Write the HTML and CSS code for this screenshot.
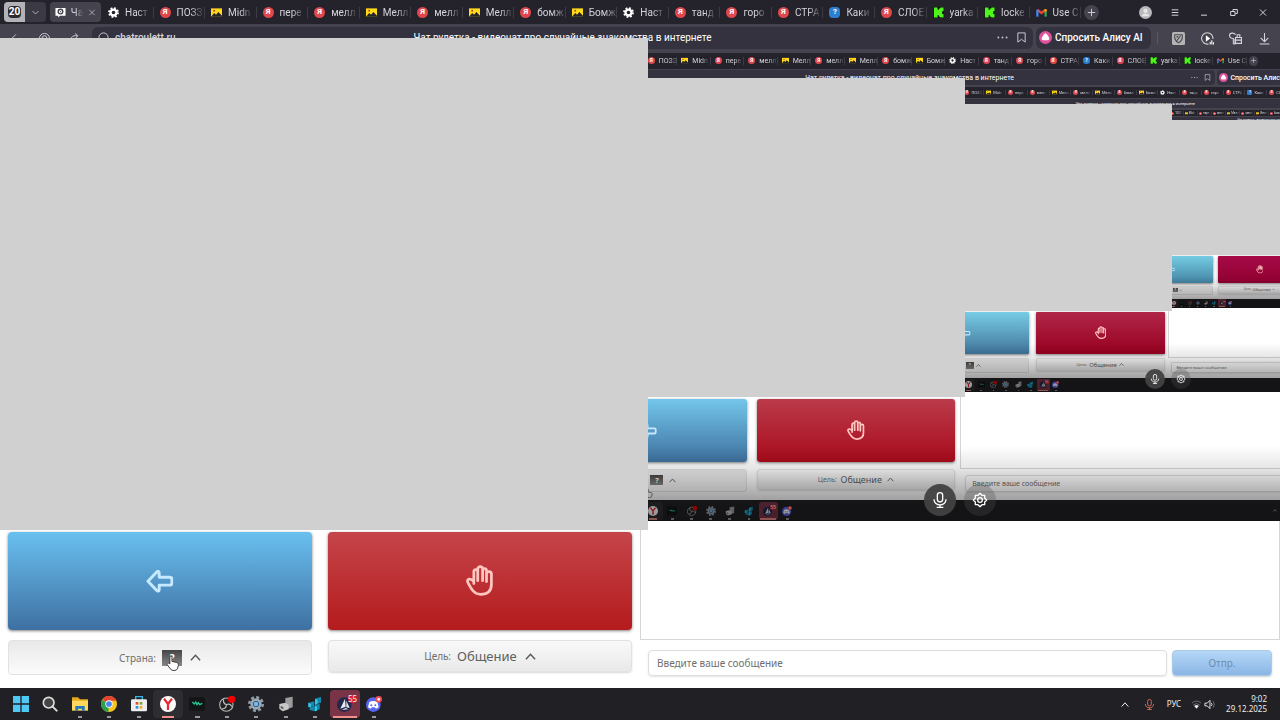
FILE: index.html
```html
<!DOCTYPE html>
<html lang="ru">
<head>
    <meta charset="UTF-8">
    <meta name="viewport" content="width=device-width, initial-scale=1.0">
    <title>Чат рулетка</title>
    <link rel="stylesheet" href="styles.css">
</head>
<body>
    <svg class="sprite" aria-hidden="true">
        <symbol id="chat" viewBox="0 0 24 24"><path fill="#fff" d="M1 2h22v17H11l-4 4v-4H1z"/><circle cx="12" cy="10" r="5" fill="none" stroke="#44434e" stroke-width="3"/><circle cx="12" cy="10" r="1.5" fill="#44434e"/></symbol>
        <symbol id="gear" viewBox="0 0 24 24"><circle cx="12" cy="12" r="6.5" fill="none" stroke="#fff" stroke-width="5"/><circle cx="12" cy="12" r="9.8" fill="none" stroke="#fff" stroke-width="4" stroke-dasharray="4 3.7"/></symbol>
        <symbol id="photo" viewBox="0 0 24 24"><path fill="#ffd91a" d="M0 3h24v18H0z"/><path fill="#24232c" d="M0 21l7-8 4 4 5-6 8 8v2z"/><circle cx="7" cy="8" r="2" fill="#b3321b"/></symbol>
        <symbol id="kick" viewBox="0 0 24 24"><path fill="#111" d="M0 0h24v24H0z"/><path fill="#4df51b" d="M2 1h8v5h3V3h3V1h7v8h-3v6h3v8h-7v-2h-3v-3h-3v5H2z"/></symbol>
        <symbol id="mail" viewBox="0 0 24 24"><path fill="none" stroke="#e84335" stroke-width="5" d="M3 6l9 7 9-7"/><path stroke="#4285f4" stroke-width="5" d="M3 6v15"/><path stroke="#34a853" stroke-width="5" d="M21 10v11"/><path stroke="#fbbc04" stroke-width="5" d="M21 5v5"/></symbol>
        <symbol id="up" viewBox="0 0 24 24"><path class="line bold" d="M2 18l10-11 10 11"/></symbol>
        <symbol id="down" viewBox="0 0 24 24"><path class="line" d="M4 8l8 8 8-8"/></symbol>
        <symbol id="close" viewBox="0 0 24 24"><path class="line" d="M4 4l16 16M20 4L4 20"/></symbol>
        <symbol id="plus" viewBox="0 0 24 24"><path class="line" d="M12 4v16M4 12h16"/></symbol>
        <symbol id="user" viewBox="0 0 24 24"><circle cx="12" cy="12" r="12" fill="#b9b9bd"/><circle cx="12" cy="9" r="4" fill="#e5e5e8"/><path fill="#e5e5e8" d="M5 19c0-7 14-7 14 0z"/></symbol>
        <symbol id="menu" viewBox="0 0 24 24"><path class="line bold" d="M2 4h20M2 12h20M2 20h20"/></symbol>
        <symbol id="minimize" viewBox="0 0 24 24"><path class="line bold" d="M3 20h18"/></symbol>
        <symbol id="restore" viewBox="0 0 24 24"><path class="line bold" d="M2 9h13v12H2zM9 8V3h13v12h-6"/></symbol>
        <symbol id="cross" viewBox="0 0 24 24"><path class="line bold" d="M3 3l18 18M21 3L3 21"/></symbol>
        <symbol id="back" viewBox="0 0 24 24"><path class="line" d="M15 3l-9 9 9 9"/></symbol>
        <symbol id="home" viewBox="0 0 24 24"><circle class="line" cx="12" cy="12" r="11"/><circle class="line" cx="12" cy="11" r="5"/></symbol>
        <symbol id="reload" viewBox="0 0 24 24"><path class="line" d="M4 21c-4-9 4-17 14-15M13 1l6 5-5 6"/></symbol>
        <symbol id="info" viewBox="0 0 24 24"><circle class="line" cx="12" cy="12" r="10"/></symbol>
        <symbol id="dots" viewBox="0 0 24 24"><g fill="#c9c8cf"><circle cx="3" cy="12" r="2"/><circle cx="12" cy="12" r="2"/><circle cx="21" cy="12" r="2"/></g></symbol>
        <symbol id="bookmark" viewBox="0 0 24 24"><path class="line" d="M4 2h16v20l-8-6-8 6z"/></symbol>
        <symbol id="alice" viewBox="0 0 24 24"><circle cx="12" cy="12" r="12" fill="#e0529c"/><path fill="#fff" d="M12 4c2 0 8 9 7 11-1 3-13 3-14 0-1-2 5-11 7-11z"/></symbol>
        <symbol id="shield" viewBox="0 0 24 24"><rect width="24" height="24" rx="3" fill="#b4b4b5"/><path fill="none" stroke="#4b4a50" stroke-width="2" d="M5 5h14c1 8-3 13-7 15-4-2-8-7-7-15zM9 16l7-9M8 9h4"/></symbol>
        <symbol id="play" viewBox="0 0 24 24"><path class="line" d="M14 22A10.5 10.5 0 1 1 22 13"/><path fill="#fff" d="M9 6l8 6-8 6zM16 23v-5h2v5zM19 23v-8h2v8zM22 23v-4h2v4z"/></symbol>
        <symbol id="keys" viewBox="0 0 24 24"><path class="line" d="M8 22V12C3 12 1 9 1 6c0-5 9-5 11-1M8 22h3v-9M12 10h11v11H12zM15 10V5h5v5M12 15h11"/></symbol>
        <symbol id="download" viewBox="0 0 24 24"><path class="line" d="M12 2v15M5 11l7 7 7-7M3 22h18"/></symbol>
        <symbol id="arrow" viewBox="0 0 28 25"><path fill="none" stroke="#c6e9ff" stroke-width="3" stroke-linejoin="round" d="M2 12.5L11 3c1-1 2.5-1 2.5 1v4.5H24c2 0 2.5 1 2.5 2v4c0 1-.5 2-2.5 2H13.5V21c0 2-1.5 2-2.5 1z"/></symbol>
        <symbol id="hand" viewBox="0 0 28 32"><path fill="none" stroke="#ffc5bf" stroke-width="2.8" stroke-linecap="round" stroke-linejoin="round" d="M8 17V7c0-3 4-3 4 0v9V4c0-3 5-3 5 0v12V6c0-3 4-3 4 0v11V9c0-3 5-3 5 0v11c0 7-4 10-11 10-6 0-9-4-13-12-2-4 3-5 6-1v2"/></symbol>
        <symbol id="mic" viewBox="0 0 24 24"><rect class="line" x="8" y="1" width="8" height="14" rx="4"/><path class="line" d="M3 11c0 11 18 11 18 0M12 19v4M7 23h10"/></symbol>
        <symbol id="cog" viewBox="0 0 24 24"><path class="line" stroke-linejoin="round" d="M9 5l3-3 3 3h4v4l3 3-3 3v4h-4l-3 3-3-3H5v-4l-3-3 3-3V5z"/><circle class="line" cx="12" cy="12" r="3.5"/></symbol>
        <symbol id="cursor" viewBox="0 0 24 30"><path fill="#fff" stroke="#333" stroke-width="1.8" stroke-linejoin="round" d="M7 17V4c0-3 4-3 4 0v8l9 2c3 1 3 3 3 6l-2 6c-2 4-10 4-13 0L2 18c-2-3 2-5 5-1z"/></symbol>
        <symbol id="windows" viewBox="0 0 24 24"><path fill="#50c8f4" d="M0 0h11v11H0zM13 0h11v11H13zM0 13h11v11H0zM13 13h11v11H13z"/></symbol>
        <symbol id="search" viewBox="0 0 24 24"><circle cx="10" cy="10" r="8" fill="#444" stroke="#ddd" stroke-width="2.5"/><path stroke="#ddd" stroke-width="3" stroke-linecap="round" d="M16 16l6 6"/></symbol>
        <symbol id="folder" viewBox="0 0 24 24"><path fill="#e5a91c" d="M0 2h9l3 3h12v8H0z"/><path fill="#ffd75e" d="M0 7h24v15H0z"/><path fill="#1f78bd" d="M5 22v-7h14v7h-4v-3H9v3z"/></symbol>
        <symbol id="chrome" viewBox="0 0 24 24"><circle cx="12" cy="12" r="12" fill="#f6c41f"/><path fill="#e14334" d="M12 12L2 5.5A12 12 0 0 1 23 7H12z"/><path fill="#2da04e" d="M12 12l-1 12A12 12 0 0 1 1.6 6z"/><circle cx="12" cy="12" r="5.5" fill="#fff"/><circle cx="12" cy="12" r="4.3" fill="#4285f4"/></symbol>
        <symbol id="store" viewBox="0 0 24 24"><path fill="none" stroke="#37b4e6" stroke-width="2" d="M7 6V1h10v5"/><rect y="5" width="24" height="18" rx="2" fill="#eee"/><path fill="#e64b2d" d="M7 9h4v4H7z"/><path fill="#75a928" d="M13 9h4v4h-4z"/><path fill="#2e91d0" d="M7 15h4v4H7z"/><path fill="#f2ad20" d="M13 15h4v4h-4z"/></symbol>
        <symbol id="yandex" viewBox="0 0 24 24"><circle cx="12" cy="12" r="12" fill="#fff"/><path fill="none" stroke="#e92b36" stroke-width="3.5" d="M6 4l6 8 6-8M12 11v10"/></symbol>
        <symbol id="wave" viewBox="0 0 24 24"><rect y="2" width="24" height="20" rx="3" fill="#121514"/><path fill="none" stroke="#20c994" stroke-width="2" d="M5 9l3 3 2-3 2 4 2-3 2 3 4-2"/></symbol>
        <symbol id="obs" viewBox="0 0 24 24"><circle cx="11" cy="13" r="10" fill="#222" stroke="#bbb" stroke-width="1.6"/><path fill="none" stroke="#bbb" stroke-width="1.8" d="M11 13c-4-2-5-5-4-8M11 13c4-2 7 0 8 3M11 13c0 4-3 6-6 6"/><circle cx="19" cy="5" r="5.5" fill="#f00000"/></symbol>
        <symbol id="settings" viewBox="0 0 24 24"><circle cx="12" cy="12" r="10" fill="none" stroke="#8e9ba6" stroke-width="4" stroke-dasharray="4.5 3.35"/><circle cx="12" cy="12" r="6.5" fill="#26476b" stroke="#9aa8b4" stroke-width="4"/><circle cx="12" cy="12" r="3.5" fill="#71b8ef"/></symbol>
        <symbol id="device" viewBox="0 0 24 24"><path fill="#9c9c9c" d="M11 3l11-2v16l-7 2-4-3z"/><path fill="#c8c8c8" d="M2 12l9-2 5 3v7l-9 3-5-4z"/><path fill="#555" d="M4 15l4 2v3l-4-2z"/></symbol>
        <symbol id="cubes" viewBox="0 0 24 24"><path fill="#138aad" d="M12 4l9-3v9l-9 3zM2 10l9-2v7l-9 2zM4 17l8-2v8l-8-2zM12 13l7-1v8l-7 3z"/><path fill="#35c4e3" d="M12 4l4 2v5l-4 2zM2 10l4 2v4l-4 1zM12 15l3 1v6l-3 1z"/></symbol>
        <symbol id="launcher" viewBox="0 0 24 24"><circle cx="11" cy="13" r="11" fill="#232849"/><path fill="#e8e8f6" d="M12 4l1 12-8 3zM14 7l5 11-5-1zM7 21l6-3 4 2z"/></symbol>
        <symbol id="discord" viewBox="0 0 24 24"><circle cx="11" cy="13" r="11" fill="#5865f2"/><path fill="#fff" d="M5 9q6-3 12 0l2 8-4 2-2-2H9l-2 2-4-2z"/><circle cx="8" cy="14" r="1.5" fill="#5865f2"/><circle cx="14" cy="14" r="1.5" fill="#5865f2"/><circle cx="19" cy="5" r="5" fill="#f04d55"/><circle cx="19" cy="5" r="2" fill="#fff"/></symbol>
        <symbol id="wifi" viewBox="0 0 24 24"><path fill="none" stroke="#777" stroke-width="2" d="M2 9q10-9 20 0M5 13q7-6 14 0"/><path fill="#eee" d="M7 15q5-4 10 0l-5 6z"/></symbol>
        <symbol id="sound" viewBox="0 0 24 24"><path class="line" d="M2 9h5l6-6v18l-6-6H2zM16 9q3 3 0 6"/><path fill="none" stroke="#777" stroke-width="2" d="M20 5q5 7 0 14"/></symbol>
    </svg>

    <div id="root"></div>
    <script src="script.js"></script>
</body>
</html>
```
FILE: styles.css
```css
* {
    box-sizing: border-box;
}

body {
    margin: 0;
    background: #fff;
    overflow: hidden;
    font-family: "Noto Sans", "Open Sans", sans-serif;
}

button, input {
    font: inherit;
    margin: 0;
    padding: 0;
    border: 0;
    background: none;
    color: inherit;
    min-width: 0;
}

a {
    color: inherit;
    text-decoration: none;
}

.sprite {
    position: absolute;
    width: 0;
    height: 0;
}

.line {
    fill: none;
    stroke: currentColor;
    stroke-width: 2;
}

.line.bold {
    stroke-width: 3;
}

.icon {
    width: var(--icon);
    height: var(--icon);
    flex: none;
}

/* each screen shows a smaller copy of itself in the video pane */
.screen {
    position: relative;
    display: grid;
    grid-template-rows: minmax(0, 24fr) minmax(0, 28fr) minmax(0, 636fr) minmax(0, 32fr);
    background: #fff;
    overflow: hidden;
    font-size: var(--text);
}

.level-1 {
    --tiny: 8px;
    --text: 10px;
    --large: 13px;
    --icon: 11px;
    --app: 16px;
    --flag: 20px;
    --round: 32px;
    --gap: 6px;
    --radius: 4px;
    --red-top: #c5454a;
    --red-bottom: #b41b1d;
    --blue-top: #69c0ef;
    --blue-bottom: #3e70a2;
    height: 100vh;
}

.level-2 {
    --tiny: 5px;
    --text: 7px;
    --large: 9px;
    --icon: 7px;
    --app: 10px;
    --flag: 13px;
    --round: 20px;
    --gap: 4px;
    --radius: 3px;
    --red-top: #ba3b4b;
    --red-bottom: #a90b1b;
    --blue-top: #73c6ea;
    --blue-bottom: #3e719f;
}

.level-3 {
    --tiny: 3px;
    --text: 4px;
    --large: 6px;
    --icon: 5px;
    --app: 7px;
    --flag: 8px;
    --round: 14px;
    --gap: 2px;
    --radius: 1px;
    --red-top: #b02648;
    --red-bottom: #980020;
    --blue-top: #78cce5;
    --blue-bottom: #40749a;
}

.level-4 {
    --tiny: 2px;
    --text: 3px;
    --large: 4px;
    --icon: 3px;
    --app: 4px;
    --flag: 5px;
    --round: 8px;
    --gap: 1px;
    --radius: 1px;
    --red-top: #a60b48;
    --red-bottom: #90002f;
    --blue-top: #75cce3;
    --blue-bottom: #4384a4;
}

.video .screen {
    flex: none;
    width: 130%;
    aspect-ratio: 16 / 9;
}

/* tab strip */
.tabs {
    display: grid;
    grid-template-columns: 4fr 42fr 4fr 51fr 1fr 979fr 3fr 15fr 32fr 147fr 2fr;
    align-items: center;
    background: #24232c;
    color: #d5d4da;
    font-family: Roboto, sans-serif;
}

.tabs > *, .toolbar > *, .taskbar > * {
    min-width: 0;
}

.tab-count {
    grid-column: 2;
    height: 84%;
    display: grid;
    grid-template-columns: 1fr 1fr;
    place-items: center;
    background: #3a3944;
    border-radius: var(--radius);
    overflow: hidden;
}

.tab-count b {
    width: 100%;
    height: 100%;
    display: grid;
    place-items: center;
    background: #b3b2b7;
}

.tab-count i {
    padding: 0 1px;
    font-style: normal;
    line-height: 1.2;
    color: #fff;
    background: #2b2a32;
    border-radius: var(--radius);
}

.tab-count .icon {
    width: calc(var(--icon) - 2px);
}

.tab-active {
    grid-column: 4;
    height: 84%;
    display: flex;
    align-items: center;
    justify-content: space-evenly;
    background: #44434e;
    border-radius: var(--radius);
    overflow: hidden;
}

.tab-active .icon:last-child {
    width: calc(var(--icon) - 3px);
}

.tab-active span {
    mask-image: linear-gradient(90deg, #000 40%, transparent);
}

.tab-list {
    grid-column: 6;
    display: flex;
}

.tab {
    flex: 1 1 0;
    min-width: 0;
    display: flex;
    align-items: center;
    gap: var(--gap);
    padding-left: var(--gap);
    border-right: 1px solid #3d3c46;
}

.tab-name {
    white-space: nowrap;
    mask-image: linear-gradient(90deg, #000 55%, rgba(0, 0, 0, 0.2));
}

.ya, .help {
    width: var(--icon);
    height: var(--icon);
    flex: none;
    display: grid;
    place-items: center;
    background: #e0474d;
    border-radius: 50%;
    color: #fff;
    font-size: var(--tiny);
    font-weight: bold;
    line-height: 1;
}

.help {
    background: #2a7fd0;
    border-radius: var(--radius);
}

.new-tab {
    grid-column: 8;
    aspect-ratio: 1;
    display: grid;
    place-items: center;
    background: #44434e;
    border-radius: 50%;
}

.window-buttons {
    grid-column: 10;
    display: grid;
    grid-template-columns: repeat(5, 1fr);
    place-items: center;
}

.window-buttons button, .tools button, .nav button {
    display: grid;
    place-items: center;
}

.window-buttons .icon:not(.avatar) {
    width: calc(var(--icon) - 3px);
}

.window-buttons .avatar {
    width: calc(var(--icon) + 2px);
    height: calc(var(--icon) + 2px);
}

/* address bar */
.toolbar {
    display: grid;
    grid-template-columns: 89fr 3fr 941fr 3fr 115fr 13fr 115fr 1fr;
    align-items: center;
    background: #44434e;
    color: #d5d4da;
    font-family: Roboto, sans-serif;
}

.nav {
    display: grid;
    grid-template-columns: repeat(3, 1fr);
    place-items: center;
}

.address {
    grid-column: 3;
    height: 80%;
    display: grid;
    grid-template-columns: 1fr auto 1fr;
    align-items: center;
    padding: 0 var(--gap);
    background: #33323e;
    border-radius: var(--gap);
    white-space: nowrap;
}

.url, .address-actions {
    display: flex;
    align-items: center;
    gap: var(--gap);
}

.url {
    font-weight: 500;
}

.address-actions {
    justify-content: flex-end;
    gap: calc(var(--gap) + 2px);
}

.page-title {
    color: #fff;
}

.alice {
    grid-column: 5;
    height: 80%;
    display: flex;
    align-items: center;
    gap: calc(var(--gap) / 2);
    padding-left: calc(var(--gap) / 2);
    background: #33323e;
    border-radius: var(--gap);
    font-weight: 500;
    color: #fff;
    white-space: nowrap;
}

.alice .icon, .tools .icon {
    width: calc(var(--icon) + 2px);
    height: calc(var(--icon) + 2px);
}

.divider {
    justify-self: center;
    width: 1px;
    height: 40%;
    background: #5a5963;
}

.tools {
    display: grid;
    grid-template-columns: repeat(4, 1fr);
    place-items: center;
}

/* page */
.page {
    display: grid;
    grid-template-columns: minmax(0, 1fr) minmax(0, 1fr);
    min-height: 0;
}

.controls {
    display: grid;
    grid-template-columns: minmax(0, 8fr) minmax(0, 304fr) minmax(0, 16fr) minmax(0, 304fr) minmax(0, 8fr);
    grid-template-rows: minmax(0, 480fr) minmax(0, 98fr) minmax(0, 10fr) minmax(0, 35fr) minmax(0, 13fr);
    min-height: 0;
}

.action {
    grid-row: 2;
    display: grid;
    place-items: center;
    border-radius: var(--radius);
    box-shadow: 0 1px 3px rgba(0, 0, 0, 0.5);
    min-height: 0;
}

.action svg {
    width: 9%;
}

.action.prev {
    grid-column: 2;
    background: linear-gradient(var(--blue-top), var(--blue-bottom));
}

.action.stop {
    grid-column: 4;
    background: linear-gradient(var(--red-top), var(--red-bottom));
}

.select {
    grid-row: 4;
    display: flex;
    align-items: center;
    justify-content: center;
    gap: var(--gap);
    min-height: 0;
    border: 1px solid #e2e2e2;
    border-radius: var(--radius);
    background: linear-gradient(#e9e9e9, #fbfbfb);
    line-height: 1;
    color: #707070;
}

.select .icon {
    margin-left: calc(var(--gap) / 3);
    color: #555;
}

.select.country {
    grid-column: 2;
}

.select.goal {
    grid-column: 4;
    height: 92%;
    background: linear-gradient(#f9f9f9, #e9e9e9);
    box-shadow: 0 1px 2px rgba(0, 0, 0, 0.15);
}

.goal strong {
    font-size: var(--large);
    font-weight: normal;
    color: #606060;
}

.flag {
    width: var(--flag);
    height: var(--app);
    display: grid;
    place-items: center;
    background: linear-gradient(#444, #888);
    color: #fff;
    font-weight: bold;
}

.dialog {
    display: grid;
    grid-template-rows: minmax(0, 469fr) minmax(0, 119fr) minmax(0, 48fr);
    min-height: 0;
}

.video {
    position: relative;
    display: flex;
    justify-content: center;
    align-items: flex-end;
    background: #44434e;
    overflow: hidden;
}

.video::after {
    content: "";
    position: absolute;
    inset: 84% 0 0;
    background: linear-gradient(transparent, rgba(0, 0, 0, 0.1) 30%, rgba(0, 0, 0, 0.36) 70%, rgba(0, 0, 0, 0.42));
}

.video-buttons {
    position: absolute;
    z-index: 1;
    inset: auto 0 1%;
    display: flex;
    justify-content: center;
    gap: calc(var(--gap) + 2px);
}

.video-buttons button {
    width: var(--round);
    height: var(--round);
    display: grid;
    place-items: center;
    border-radius: 50%;
    background: rgba(65, 65, 65, 0.95);
    color: #fff;
}

.video-buttons .camera {
    background: rgba(80, 80, 80, 0.3);
}

.video-buttons .icon {
    width: calc(var(--round) / 2);
    height: calc(var(--round) / 2);
}

.messages {
    border: 1px solid #d6d6d6;
    border-top: 0;
}

.message-form {
    display: grid;
    grid-template-columns: minmax(0, 8fr) minmax(0, 519fr) minmax(0, 5fr) minmax(0, 100fr) minmax(0, 8fr);
    grid-template-rows: minmax(0, 10fr) minmax(0, 26fr) minmax(0, 12fr);
    min-height: 0;
}

.message-form input {
    grid-area: 2 / 2;
    padding-left: calc(var(--gap) + 2px);
    border: 1px solid #dedede;
    border-radius: var(--radius);
    box-shadow: 0 1px 2px rgba(0, 0, 0, 0.1);
}

.message-form input::placeholder {
    color: #707070;
}

.message-form button {
    grid-area: 2 / 4;
    border: 1px solid #a9cbe9;
    border-radius: var(--radius);
    background: linear-gradient(#b5d7f7, #8ab6e5);
    box-shadow: 0 1px 2px rgba(0, 0, 0, 0.2);
    line-height: 1;
    color: #6b8bac;
}

/* grey camera placeholders lie over the page and part of the toolbar */
.cover {
    position: absolute;
    left: 0;
    top: 5.3%;
    width: 50.65%;
    height: 68.3%;
    background: #d0d0d0;
}

.pointer {
    position: absolute;
    left: 13%;
    top: 91%;
    width: calc(var(--icon) + 2px);
    height: var(--app);
}

.level-2 > .pointer {
    left: 12%;
    top: 93%;
}

/* taskbar */
.taskbar {
    display: grid;
    grid-template-columns: 6fr 383fr 723fr 26fr 22fr 28fr 30fr 49fr 13fr;
    align-items: center;
    background: #212024;
    color: #eee;
    line-height: 1;
    min-height: 0;
    font-size: var(--tiny);
}

.apps {
    grid-column: 2;
    height: 100%;
    display: grid;
    grid-template-columns: repeat(13, minmax(0, 1fr));
    align-items: center;
}

.app {
    position: relative;
    height: 86%;
    display: grid;
    place-items: center;
    border-radius: var(--radius);
}

.app .icon {
    width: var(--app);
    height: var(--app);
}

.app.open::after {
    content: "";
    position: absolute;
    bottom: 0;
    left: 43%;
    width: 14%;
    height: 6%;
    background: #999;
}

.app.current {
    background: #2e2d31;
}

.app.alert {
    background: #7a3447;
}

.app.current::after, .app.alert::after {
    left: 30%;
    width: 40%;
    background: #f0908c;
}

.app.alert::after {
    left: 10%;
    width: 80%;
}

.badge {
    position: absolute;
    top: 18%;
    right: 8%;
    background: #d8242d;
    font-size: var(--tiny);
    border-radius: var(--radius);
}

.tray {
    display: grid;
    place-items: center;
}

.tray-show {
    grid-column: 4;
}

.tray-show .icon {
    width: calc(var(--icon) - 3px);
}

.tray-mic {
    color: #d6705c;
}

.tray-net {
    display: flex;
    justify-content: space-evenly;
}

.clock {
    text-align: right;
    white-space: nowrap;
    line-height: 1.3;
}

.clock span {
    display: block;
}
```
FILE: script.js
```js
// tab names are cut to what fits beside the icon
const tabs = [
    ['gear', 'Наст'], ['ya', 'ПОЗЗ'], ['photo', 'Midn'], ['ya', 'пере'],
    ['ya', 'мелл'], ['photo', 'Мелл'], ['ya', 'мелл'], ['photo', 'Мелл'],
    ['ya', 'бомж'], ['photo', 'Бомж'], ['gear', 'Наст'], ['ya', 'танд'],
    ['ya', 'горо'], ['ya', 'СТРА'], ['help', 'Каки'], ['ya', 'СЛОЕ'],
    ['kick', 'yarka'], ['kick', 'locke'], ['mail', 'Use C']
];

const apps = [
    ['windows', 'Пуск', ''], ['search', 'Поиск', ''], ['folder', 'Проводник', 'open'],
    ['chrome', 'Chrome', 'open'], ['store', 'Магазин', 'open'], ['yandex', 'Браузер', 'open current'],
    ['wave', 'Звук', 'open'], ['obs', 'Запись', 'open'], ['settings', 'Параметры', 'open'],
    ['device', 'Устройства', 'open'], ['cubes', 'Кубы', 'open'], ['launcher', 'Игры', 'open alert'],
    ['discord', 'Discord', 'open']
];

const levels = 4;

function icon(name, extra = '') {
    return `<svg class="icon ${extra}" aria-hidden="true"><use href="#${name}"/></svg>`;
}

function iconButton(name, label, extra = '') {
    return `<button type="button" aria-label="${label}">${icon(name, extra)}</button>`;
}

function tab([name, title]) {
    let mark = icon(name);
    if (name === 'ya') mark = '<span class="ya">Я</span>';
    if (name === 'help') mark = '<span class="help">?</span>';
    return `<a class="tab" href="#">${mark}<span class="tab-name">${title}</span></a>`;
}

function app([name, title, state]) {
    const badge = name === 'launcher' ? '<span class="badge">55</span>' : '';
    return `<button type="button" class="app ${state}" aria-label="${title}">${icon(name)}${badge}</button>`;
}

function screen(level) {
    const inner = level < levels ? screen(level + 1) : '';
    const pointer = level < 3 ? '<svg class="pointer" aria-hidden="true"><use href="#cursor"/></svg>' : '';
    return `
    <div class="screen level-${level}">
        <div class="tabs">
            <button type="button" class="tab-count"><b><i>20</i></b>${icon('down')}</button>
            <a class="tab-active" href="#">${icon('chat')}<span>Ча</span>${icon('close')}</a>
            <nav class="tab-list">${tabs.map(tab).join('')}</nav>
            <button type="button" class="new-tab" aria-label="Новая вкладка">${icon('plus')}</button>
            <div class="window-buttons">
                ${iconButton('user', 'Профиль', 'avatar')}
                ${iconButton('menu', 'Меню')}
                ${iconButton('minimize', 'Свернуть')}
                ${iconButton('restore', 'Развернуть')}
                ${iconButton('cross', 'Закрыть')}
            </div>
        </div>
        <div class="toolbar">
            <div class="nav">
                ${iconButton('back', 'Назад')}
                ${iconButton('home', 'Главная')}
                ${iconButton('reload', 'Обновить')}
            </div>
            <div class="address">
                <span class="url">${icon('info')}${level === 1 ? 'chatroulett.ru' : ''}</span>
                <span class="page-title">Чат рулетка - видеочат про случайные знакомства в интернете</span>
                <span class="address-actions">${icon('dots')}${icon('bookmark')}</span>
            </div>
            <button type="button" class="alice">${icon('alice')}Спросить Алису AI</button>
            <span class="divider"></span>
            <div class="tools">
                ${iconButton('shield', 'Защита')}
                ${iconButton('play', 'Плеер')}
                ${iconButton('keys', 'Пароли')}
                ${iconButton('download', 'Загрузки')}
            </div>
        </div>
        <main class="page">
            <section class="controls">
                <button type="button" class="action prev" aria-label="Назад"><svg viewBox="0 0 28 25"><use href="#arrow"/></svg></button>
                <button type="button" class="action stop" aria-label="Стоп"><svg viewBox="0 0 28 32"><use href="#hand"/></svg></button>
                <button type="button" class="select country">Страна: <span class="flag">?</span>${icon('up')}</button>
                <button type="button" class="select goal">Цель: <strong>Общение</strong>${icon('up')}</button>
            </section>
            <section class="dialog">
                <div class="video">
                    ${inner}
                    <div class="video-buttons">
                        <button type="button" aria-label="Микрофон">${icon('mic')}</button>
                        <button type="button" class="camera" aria-label="Настройки">${icon('cog')}</button>
                    </div>
                </div>
                <div class="messages"></div>
                <form class="message-form">
                    <input type="text" aria-label="Сообщение" placeholder="Введите ваше сообщение">
                    <button type="button">Отпр.</button>
                </form>
            </section>
        </main>
        <div class="cover"></div>
        <footer class="taskbar">
            <div class="apps">${apps.map(app).join('')}</div>
            <span class="tray tray-show">${icon('up')}</span>
            <span class="tray tray-mic">${icon('mic')}</span>
            <span class="tray">РУС</span>
            <span class="tray-net">${icon('wifi')}${icon('sound')}</span>
            <time class="clock"><span>9:02</span><span>29.12.2025</span></time>
        </footer>
        ${pointer}
    </div>`;
}

document.getElementById('root').innerHTML = screen(1);
```
